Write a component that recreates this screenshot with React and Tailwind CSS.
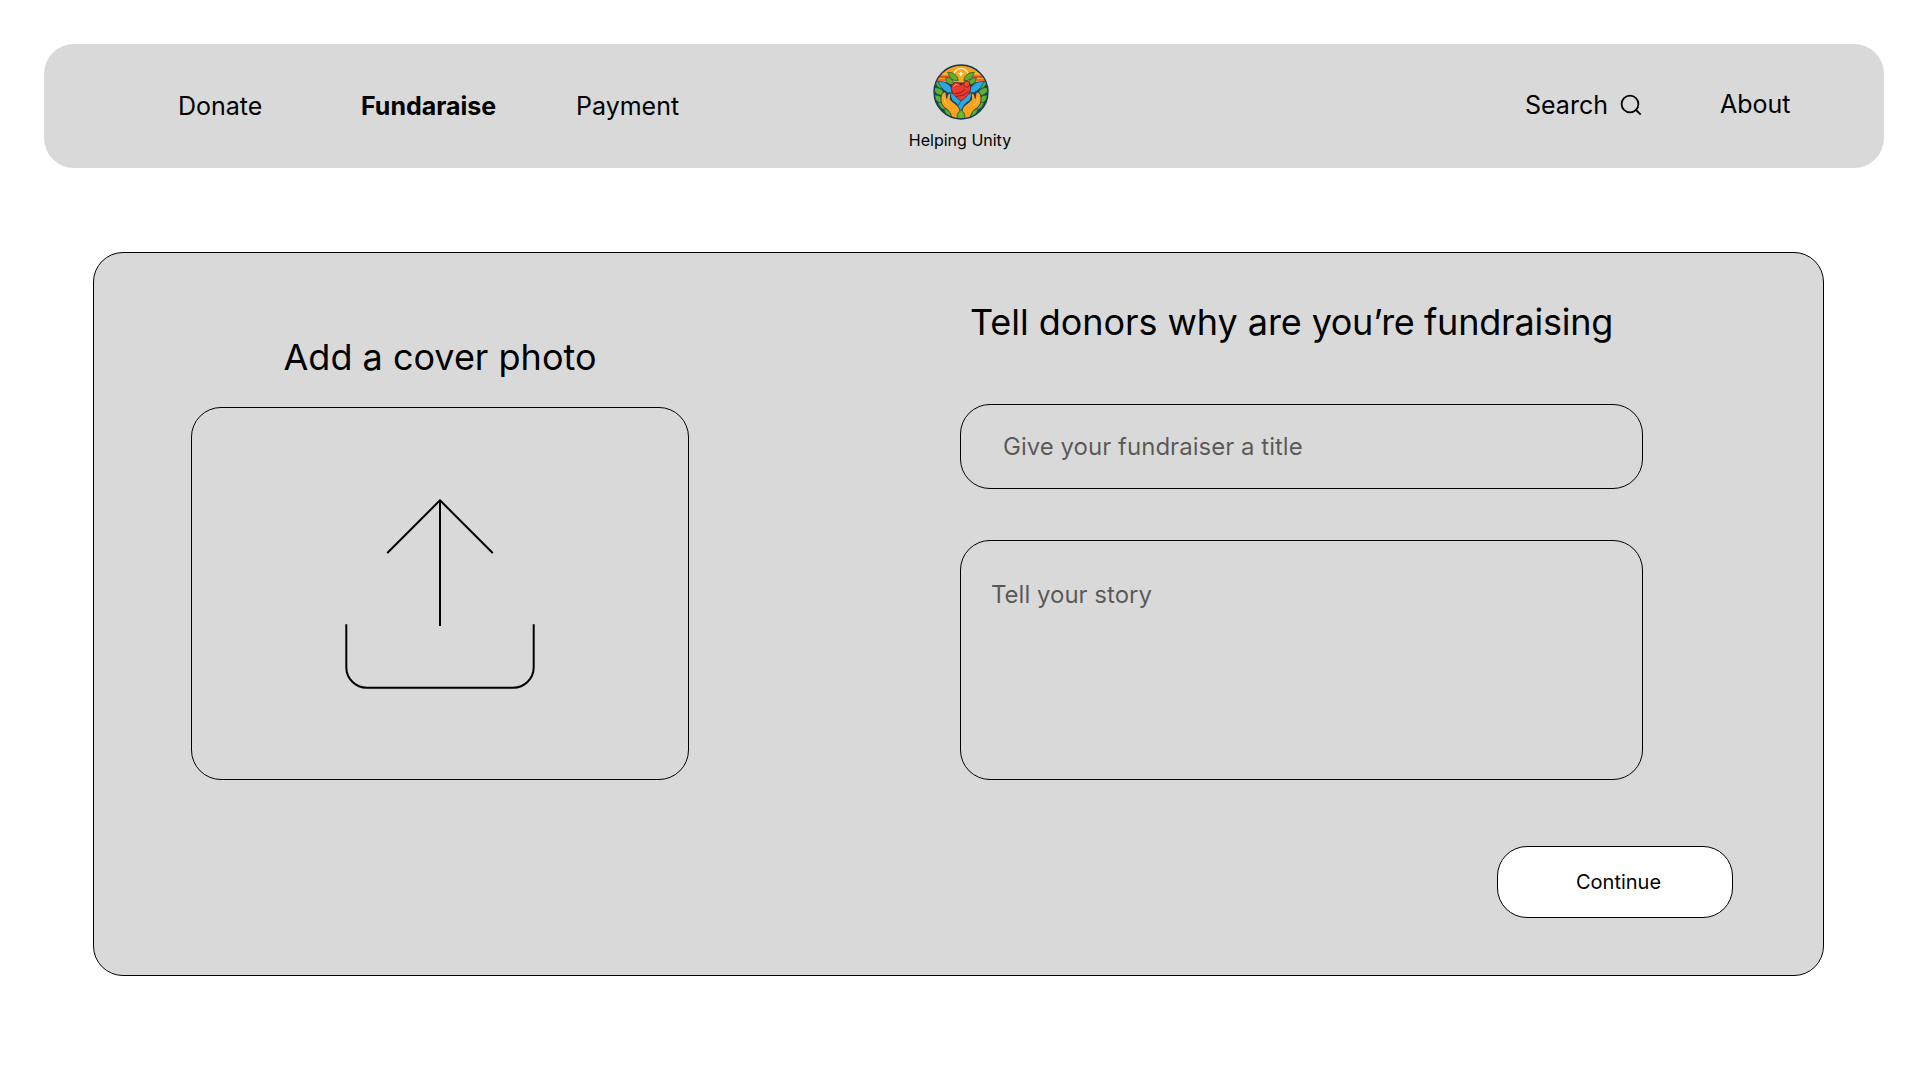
function Logo() {
  return (
    <svg className="ml-[2px] h-[58px] w-[58px]" viewBox="33 24 174 174" aria-hidden="true">
      <defs>
        <clipPath id="disc">
          <circle cx="120" cy="111" r="80" />
        </clipPath>
      </defs>
      <g clipPath="url(#disc)">
        <rect x="30" y="20" width="180" height="180" fill="#12405a" />
        <rect x="30" y="20" width="180" height="62" fill="#f9a11b" />
        <path d="M30 55h60M150 55h60" stroke="#fbc04a" strokeWidth="3" />
        <path d="M30 65h66M144 65h66" stroke="#e8432a" strokeWidth="6" />
        <path d="M30 75h66M144 75h66" stroke="#f15a29" strokeWidth="5" />
        <path d="M97 62a23 23 0 0 1 46 0v20h-46z" fill="#fba81c" />
        <path d="M98 62a22 22 0 0 1 44 0" fill="none" stroke="#fdecc4" strokeWidth="4" />
        <path d="M120 47l2.500 6.500 6.500 2.500-6.500 2.500-2.500 6.500-2.500-6.500-6.500-2.500 6.500-2.500z" fill="#fff" />
        <g fill="#5fb02e" stroke="#17503c" strokeWidth="2">
          <path d="M80 52q26-1 32 24q-22 6-32-24z" />
          <path d="M160 52q-26-1-32 24q22 6 32-24z" />
          <path d="M74 68q22 0 24 20q-22 4-24-20z" />
          <path d="M166 68q-22 0-24 20q22 4 24-20z" />
          <path d="M42 78q28 0 32 22q-28 6-32-22z" />
          <path d="M198 78q-28 0-32 22q28 6 32-22z" />
          <path d="M38 98q27-3 32 22q-27 6-32-22z" />
          <path d="M202 98q-27-3-32 22q27 6 32-22z" />
          <path d="M40 120q27-1 32 25q-27 5-32-25z" />
          <path d="M200 120q-27-1-32 25q27 5 32-25z" />
          <path d="M50 142q27-1 36 23q-26 6-36-23z" />
          <path d="M190 142q-27-1-36 23q26 6 36-23z" />
          <path d="M68 162q24-4 36 26q-26 4-36-26z" />
          <path d="M172 162q-24-4-36 26q26 4 36-26z" />
        </g>
        <g fill="#2ba7e2" stroke="#0e4568" strokeWidth="2">
          <path d="M50 80q28-4 44 22l-2 14q-24-2-42-36z" />
          <path d="M190 80q-28-4-44 22l2 14q24-2 42-36z" />
          <path d="M84 112q24 4 37 27l14 24-15 6q-8-24-26-32z" />
          <path d="M156 112q-24 4-37 27l-14 24 15 6q8-24 26-32z" />
        </g>
        <path
          d="M120 138C106 128 91 116 91 99c0-19 23-21 29-8 6-13 29-11 29 8 0 17-15 29-29 39z"
          fill="#ea3b2d"
          stroke="#5a1720"
          strokeWidth="2"
        />
        <circle cx="137" cy="87" r="9" fill="#f4492f" stroke="#7c1b1d" strokeWidth="2.500" />
        <path d="M102 116q19 0 30-14M106 124q24-1 36-15" fill="none" stroke="#641a20" strokeWidth="2.500" />
        <path d="M98 94q3-7 10-6" fill="none" stroke="#ff9a7d" strokeWidth="3" strokeLinecap="round" />
        <g fill="#fba21f" stroke="#16394b" strokeWidth="2.500" strokeLinejoin="round">
          <path d="M60 128q2-20 15-16l2 18q3-18 12-14l-1 18q5 6 18 15 15 11 12 41h-26q-2-22-20-31-14-12-12-31z" />
          <path d="M180 128q-2-20-15-16l-2 18q-3-18-12-14l1 18q-5 6-18 15-15 11-12 41h26q2-22 20-31 14-12 12-31z" />
        </g>
        <path d="M69 126q0 17 14 25M171 126q0 17-14 25" fill="none" stroke="#ffc95a" strokeWidth="3" />
        <path d="M120 164q-18 14-9 28h18q9-14-9-28z" fill="#5fb02e" stroke="#17503c" strokeWidth="2" />
        <path d="M120 172v20" stroke="#a8cf3f" strokeWidth="2" />
      </g>
      <circle cx="120" cy="111" r="81" fill="none" stroke="#103a50" strokeWidth="4" />
    </svg>
  );
}

function SearchIcon() {
  return (
    <svg className="h-6 w-6" viewBox="0 0 24 24" fill="none" stroke="black" strokeWidth="1.800" aria-hidden="true">
      <circle cx="12" cy="12" r="8.400" />
      <path d="M18 18l4.700 4.700" />
    </svg>
  );
}

function UploadIcon() {
  return (
    <svg className="h-[200px] w-[200px]" viewBox="0 0 200 200" fill="none" stroke="black" strokeWidth="2" aria-hidden="true">
      <path d="M47.800 62.500L100 10.300l52.200 52.200" strokeLinejoin="round" strokeLinecap="round" />
      <path d="M100 10v126" />
      <path d="M6.300 134.300v42.900a20.500 20.500 0 0 0 20.500 20.500h146.400a20.500 20.500 0 0 0 20.500-20.500V134.300" />
    </svg>
  );
}

function Header() {
  return (
    <header className="flex h-[124px] w-[1840px] rounded-[30px] bg-[#d9d9d9]">
      <nav className="flex w-[825px] pl-[134px] pt-[47px] text-[25px] leading-[30px]">
        <a className="w-[183px]">Donate</a>
        <a className="w-[215px] font-bold">Fundaraise</a>
        <a>Payment</a>
      </nav>
      <div className="flex w-[182px] flex-col items-center pt-[19px]">
        <Logo />
        <span className="mt-[9px] text-base leading-5">Helping Unity</span>
      </div>
      <nav className="flex flex-1 pl-[474px] text-[25px] leading-[30px]">
        <a className="mt-[46px] flex w-[195px]">
          <span className="w-[93px]">Search</span>
          <span className="mt-[2px]">
            <SearchIcon />
          </span>
        </a>
        <a className="mt-[45px]">About</a>
      </nav>
    </header>
  );
}

export default function App() {
  return (
    <div className="h-[1080px] w-[1920px] overflow-hidden bg-white pl-[44px] pt-[44px] font-['Inter',sans-serif] text-black">
      <Header />
      <main className="ml-[49px] mt-[84px] flex h-[724px] w-[1731px] rounded-[30px] border border-black bg-[#d9d9d9]">
        <section className="ml-[97px] mt-[82px] w-[498px]">
          <h1 className="text-center text-[36px] leading-[44px]">Add a cover photo</h1>
          <button className="mt-[28px] flex h-[373px] w-[498px] justify-center rounded-[30px] border border-black pt-[82px]">
            <UploadIcon />
          </button>
        </section>
        <form className="ml-[271px] mt-[47px] w-[773px]">
          <h1 className="whitespace-nowrap pl-[10px] text-[36px] leading-[44px] tracking-[-0.06px]">
            Tell donors why are <span className="tracking-[-0.5px]">you’re </span>
            <span className="tracking-[-0.2px]">fundraising</span>
          </h1>
          <input
            className="mt-[60px] block h-[85px] w-[683px] rounded-[30px] border border-black pl-[42px] text-[24px] tracking-[0.02px] placeholder:text-black/60"
            placeholder="Give your fundraiser a title"
          />
          <textarea
            className="mt-[51px] block h-[240px] w-[683px] resize-none rounded-[30px] border border-black pl-[30px] pt-[39px] text-[24px] leading-[29px] placeholder:text-black/60"
            placeholder="Tell your story"
          />
          <button
            type="button"
            className="ml-auto mt-[66px] flex h-[72px] w-[236px] items-center rounded-[30px] border border-black bg-white pl-[78px] text-[20px] leading-6"
          >
            Continue
          </button>
        </form>
      </main>
    </div>
  );
}
